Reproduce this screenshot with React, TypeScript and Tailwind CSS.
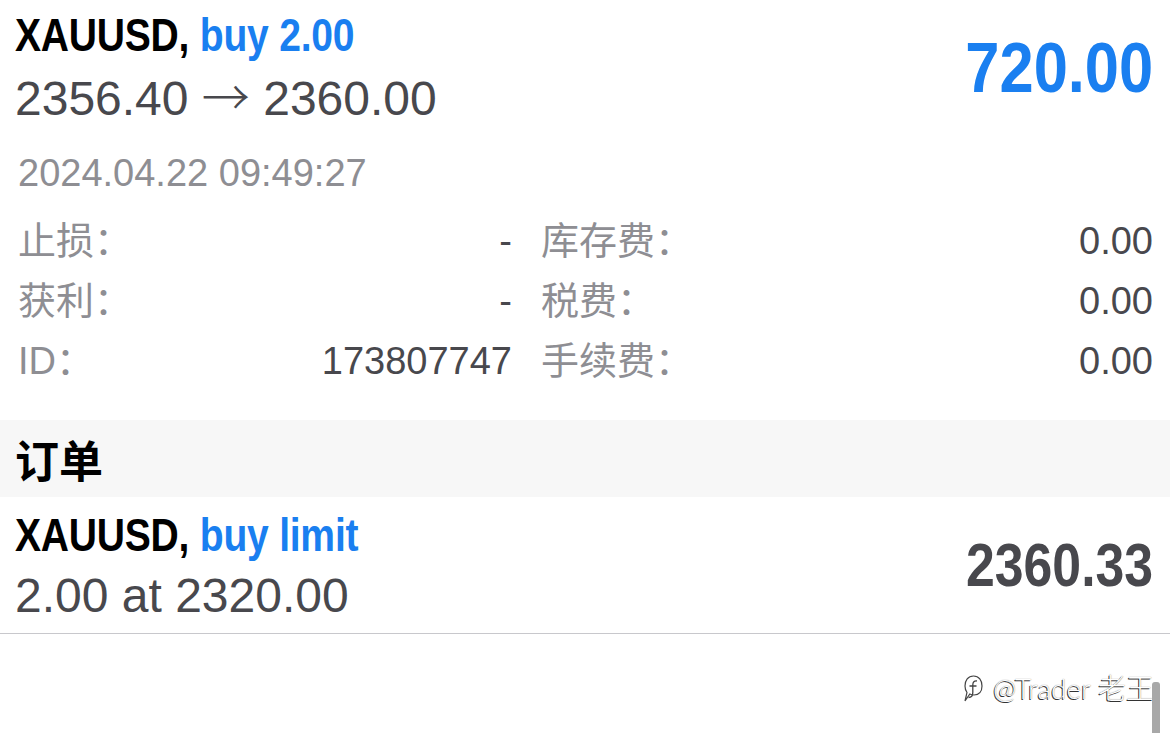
import React from "react";

const rowsLeft = [
  { label: "止损：", value: "-" },
  { label: "获利：", value: "-" },
  { label: "ID：", value: "173807747" },
];
const rowsRight = [
  { label: "库存费：", value: "0.00" },
  { label: "税费：", value: "0.00" },
  { label: "手续费：", value: "0.00" },
];

export default function App() {
  return (
    <div className="relative w-[1170px] h-[733px] overflow-hidden bg-white font-['Liberation_Sans','Noto_Sans_CJK_SC',sans-serif]">
      {/* Position block */}
      <div className="flex justify-between items-start pl-[15px] pr-[17px] pt-[12px]">
        <div className="flex flex-col">
          <div className="h-[46px] text-[46px] leading-[46px] font-bold text-black whitespace-nowrap">
            <span className="inline-block origin-left scale-x-[0.85] tracking-[-0.3px]">
              XAUUSD, <span className="text-[#1a7ff0]">buy 2.00</span>
            </span>
          </div>
          <div className="mt-[12px] h-[48px] text-[48px] leading-[48px] text-[#48484d] whitespace-nowrap">
            2356.40 <span className="font-['Noto_Sans_CJK_SC'] font-light">→</span> 2360.00
          </div>
        </div>
        <div className="mt-[21px] h-[70px] text-[71px] leading-[70px] font-bold text-[#1a7ff0]">
          <span className="inline-block origin-right scale-x-[0.865]">720.00</span>
        </div>
      </div>

      {/* Timestamp */}
      <div className="mt-[36px] pl-[18px] h-[38px] text-[38px] leading-[38px] text-[#8e8e93]">
        2024.04.22 09:49:27
      </div>

      {/* Details */}
      <div className="mt-[19px] flex pl-[18px] pr-[17px] text-[38px]">
        <div className="w-[494px] flex flex-col">
          {rowsLeft.map((r) => (
            <div key={r.label} className="h-[60px] leading-[60px] flex justify-between">
              <span className="text-[#8e8e93]">{r.label}</span>
              <span className="text-[#48484d]">{r.value}</span>
            </div>
          ))}
        </div>
        <div className="ml-[29px] flex-1 flex flex-col">
          {rowsRight.map((r) => (
            <div key={r.label} className="h-[60px] leading-[60px] flex justify-between">
              <span className="text-[#8e8e93]">{r.label}</span>
              <span className="text-[#48484d]">{r.value}</span>
            </div>
          ))}
        </div>
      </div>

      {/* Section header */}
      <div className="mt-[29px] h-[77px] bg-[#f7f7f7] flex items-center pl-[15px]">
        <span className="text-[44px] leading-[44px] font-bold text-black font-['Noto_Sans_CJK_SC',sans-serif]">订单</span>
      </div>

      {/* Order */}
      <div className="flex justify-between items-center pl-[15px] pr-[17px] h-[137px] border-b border-[#c8c8cc]">
        <div className="flex flex-col pt-[2px]">
          <div className="h-[46px] text-[46px] leading-[46px] font-bold text-black whitespace-nowrap">
            <span className="inline-block origin-left scale-x-[0.85] tracking-[-0.3px]">
              XAUUSD, <span className="text-[#1a7ff0]">buy limit</span>
            </span>
          </div>
          <div className="mt-[14px] h-[48px] text-[48px] leading-[48px] text-[#48484d] whitespace-nowrap">
            2.00 at 2320.00
          </div>
        </div>
        <div className="h-[62px] text-[62px] leading-[62px] font-bold text-[#48484d]">
          <span className="inline-block origin-right scale-x-[0.835]">2360.33</span>
        </div>
      </div>

      {/* Watermark */}
      <div className="absolute right-[16px] top-[673px] flex items-center gap-[10px]">
        <svg width="20" height="30" viewBox="0 0 20 30" fill="none">
          <path
            d="M10.5 3 C16 3 19 7.5 19 13 C19 18.5 16 22 11 22 C9.5 22 8 21.6 6.8 21 L2 28 L4 19.5 C2.5 17.5 2 15.5 2 13 C2 7.5 5 3 10.5 3 Z"
            stroke="#444"
            strokeWidth="1.2"
            fill="white"
          />
          <path d="M14 8 C11.2 7.6 9.8 9.2 9.8 12 L9.8 19.5 C9.8 22.5 8 24.5 5.5 24.5 M6.5 13 L13.5 13" stroke="#444" strokeWidth="1.3" fill="none" />
        </svg>
        <span className="text-[28px] leading-[30px] font-['Lato','Noto_Sans_CJK_SC',sans-serif] font-light text-white [text-shadow:-1px_1px_0_#333,0_0_1px_#666] whitespace-nowrap">
          @Trader 老王
        </span>
      </div>
      <div className="absolute left-[1152px] top-[682px] w-[8px] h-[60px] bg-[#a8a8a8] rounded-t-[3px]" />
    </div>
  );
}
